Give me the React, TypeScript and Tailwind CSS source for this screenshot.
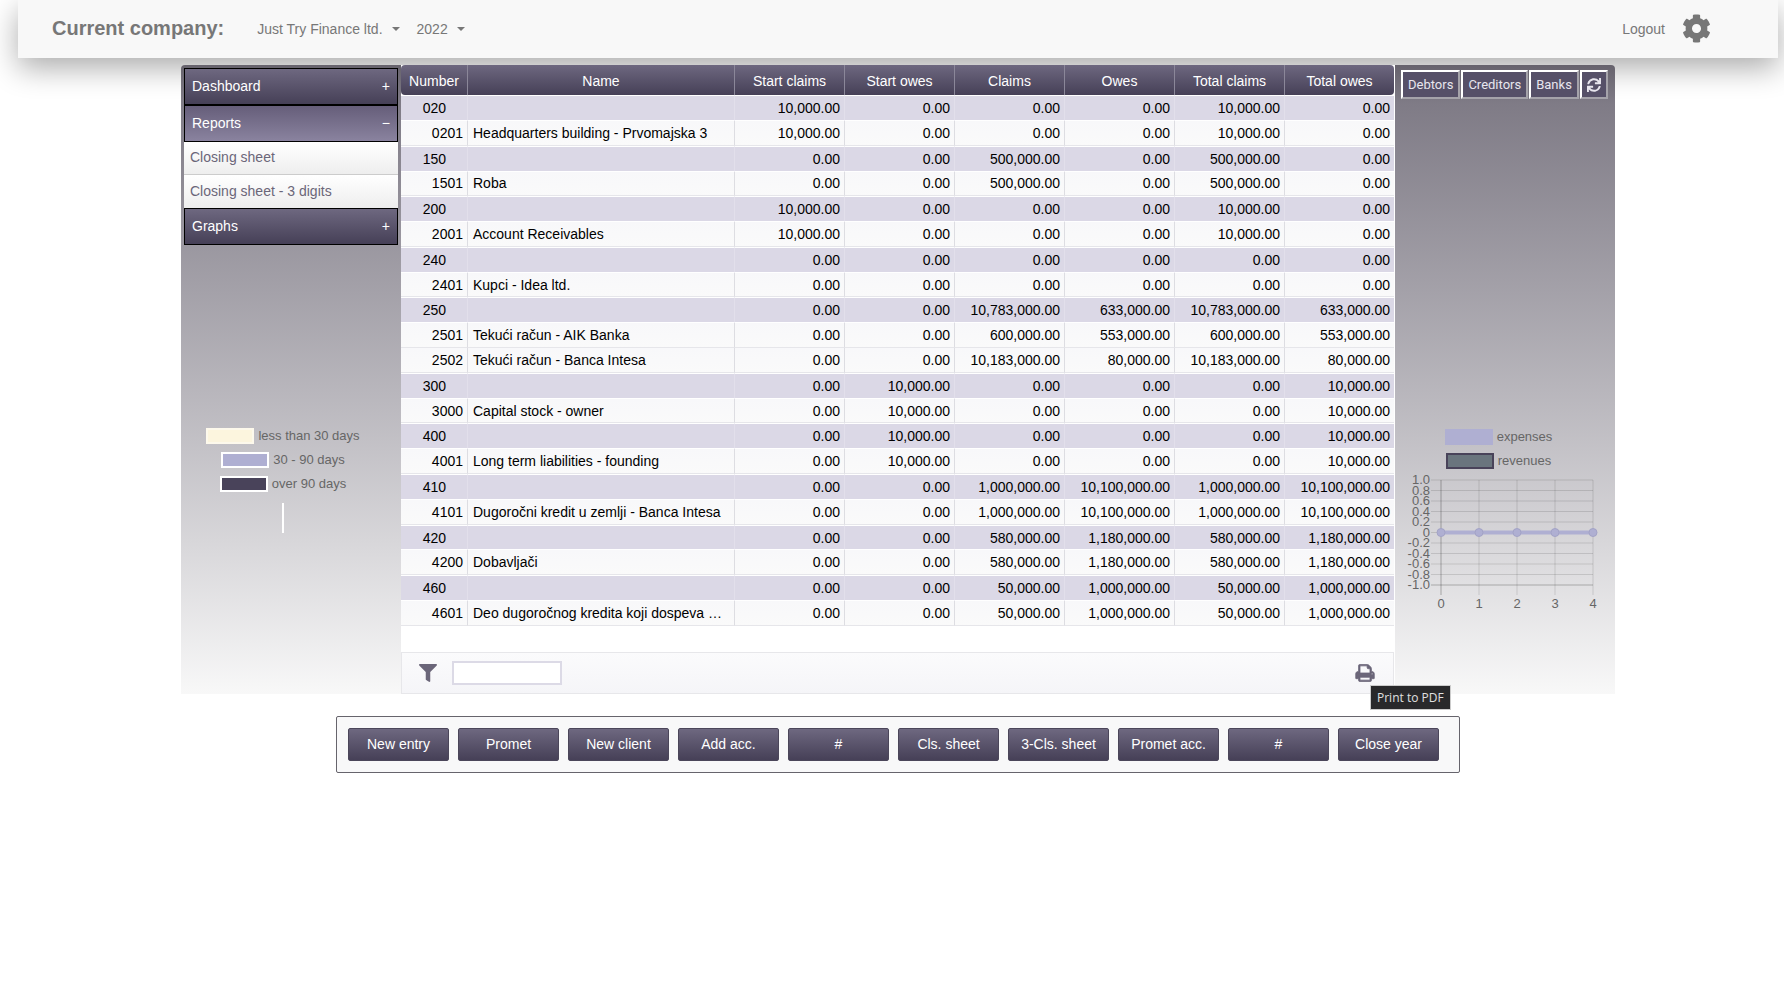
import React from 'react';
import { FaFilter, FaSync, FaCog } from 'react-icons/fa';

type Row = [string, string, string, string, string, string, string, string];

const Z = '0.00';
const rows: Row[] = [
  ['020', '', '10,000.00', Z, Z, Z, '10,000.00', Z],
  ['0201', 'Headquarters building - Prvomajska 3', '10,000.00', Z, Z, Z, '10,000.00', Z],
  ['150', '', Z, Z, '500,000.00', Z, '500,000.00', Z],
  ['1501', 'Roba', Z, Z, '500,000.00', Z, '500,000.00', Z],
  ['200', '', '10,000.00', Z, Z, Z, '10,000.00', Z],
  ['2001', 'Account Receivables', '10,000.00', Z, Z, Z, '10,000.00', Z],
  ['240', '', Z, Z, Z, Z, Z, Z],
  ['2401', 'Kupci - Idea ltd.', Z, Z, Z, Z, Z, Z],
  ['250', '', Z, Z, '10,783,000.00', '633,000.00', '10,783,000.00', '633,000.00'],
  ['2501', 'Tekući račun - AIK Banka', Z, Z, '600,000.00', '553,000.00', '600,000.00', '553,000.00'],
  ['2502', 'Tekući račun - Banca Intesa', Z, Z, '10,183,000.00', '80,000.00', '10,183,000.00', '80,000.00'],
  ['300', '', Z, '10,000.00', Z, Z, Z, '10,000.00'],
  ['3000', 'Capital stock - owner', Z, '10,000.00', Z, Z, Z, '10,000.00'],
  ['400', '', Z, '10,000.00', Z, Z, Z, '10,000.00'],
  ['4001', 'Long term liabilities - founding', Z, '10,000.00', Z, Z, Z, '10,000.00'],
  ['410', '', Z, Z, '1,000,000.00', '10,100,000.00', '1,000,000.00', '10,100,000.00'],
  ['4101', 'Dugoročni kredit u zemlji - Banca Intesa', Z, Z, '1,000,000.00', '10,100,000.00', '1,000,000.00', '10,100,000.00'],
  ['420', '', Z, Z, '580,000.00', '1,180,000.00', '580,000.00', '1,180,000.00'],
  ['4200', 'Dobavljači', Z, Z, '580,000.00', '1,180,000.00', '580,000.00', '1,180,000.00'],
  ['460', '', Z, Z, '50,000.00', '1,000,000.00', '50,000.00', '1,000,000.00'],
  ['4601', 'Deo dugoročnog kredita koji dospeva …', Z, Z, '50,000.00', '1,000,000.00', '50,000.00', '1,000,000.00'],
];

const columns = ['Number', 'Name', 'Start claims', 'Start owes', 'Claims', 'Owes', 'Total claims', 'Total owes'];

const actions = ['New entry', 'Promet', 'New client', 'Add acc.', '#', 'Cls. sheet', '3-Cls. sheet', 'Promet acc.', '#', 'Close year'];

function Caret() {
  return <span className="border-x-4 border-t-4 border-x-transparent border-t-current" />;
}

function TopBar() {
  return (
    <header className="mx-[6px] flex h-[58px] items-center bg-[#f8f8f8] pb-[2px] pl-[34px] pr-[67px] text-[#777] shadow-[0_10px_30px_rgba(0,0,0,0.33)]">
      <h1 className="text-[20px] font-bold">Current company:</h1>
      <nav className="ml-[33px] flex items-center gap-[17px] pt-[2px] text-sm">
        <button className="flex items-center gap-[9px]">Just Try Finance ltd. <Caret /></button>
        <button className="flex items-center gap-[9px]">2022 <Caret /></button>
      </nav>
      <div className="ml-auto flex items-center gap-[17px] text-sm">
        <a href="#logout" className="pt-[2px]">Logout</a>
        <button aria-label="Settings"><FaCog className="size-[29px]" /></button>
      </div>
    </header>
  );
}

function MenuHeader({ label, open = false }: { label: string; open?: boolean }) {
  return (
    <button
      aria-expanded={open}
      className={
        'flex h-[37px] w-full items-center justify-between border border-black bg-linear-to-b px-[7px] pb-[2px] text-sm text-white ' +
        (open ? 'from-[#665e7a] to-[#8a839f]' : 'from-[#6e6880] to-[#464057]')
      }
    >
      <span>{label}</span>
      <span>{open ? '−' : '+'}</span>
    </button>
  );
}

function LegendItem({ label, swatch }: { label: string; swatch: string }) {
  return (
    <li className="flex items-center gap-1 text-[13px] leading-[24px]">
      <span className={'h-4 w-12 border-2 ' + swatch} />
      {label}
    </li>
  );
}

function LeftPanel() {
  return (
    <aside className="flex w-[220px] shrink-0 flex-col rounded-tl-sm bg-linear-to-b from-[#67636d] via-[#7f7b86] via-[6%] to-[#f8f8f8] px-[3px] pt-[3px]">
      <MenuHeader label="Dashboard" />
      <MenuHeader label="Reports" open />
      <a href="#closing" className="flex h-[33px] items-center border-b border-[#ccc] bg-linear-to-b from-white to-[#eee] px-[6px] pb-[2px] text-sm text-[#6b6679]">Closing sheet</a>
      <a href="#closing3" className="flex h-[33px] items-center bg-linear-to-b from-white to-[#eee] px-[6px] pb-[2px] text-sm text-[#6b6679]">Closing sheet - 3 digits</a>
      <MenuHeader label="Graphs" />
      <div className="mt-[179px] flex flex-col items-center pr-[16px] text-[#666]">
        <ul className="flex flex-col items-center">
          <LegendItem label="less than 30 days" swatch="border-[#fdf9ec] bg-[#fcf5de]" />
          <LegendItem label="30 - 90 days" swatch="border-white bg-[#afafd2]" />
          <LegendItem label="over 90 days" swatch="border-white bg-[#49435a]" />
        </ul>
        <span className="mt-[7px] h-[30px] w-[2px] bg-white" />
      </div>
    </aside>
  );
}

function Ledger() {
  return (
    <table className="h-[561px] w-full table-fixed border-separate border-spacing-0 text-sm leading-5 text-black">
      <colgroup>
        <col className="w-[66px]" />
        <col />
        <col className="w-[110px]" />
        <col className="w-[110px]" />
        <col className="w-[110px]" />
        <col className="w-[110px]" />
        <col className="w-[110px]" />
        <col className="w-[110px]" />
      </colgroup>
      <thead>
        <tr className="text-white">
          {columns.map((c) => (
            <th key={c} className="h-[30px] border-l border-[#8b8799] bg-linear-to-b from-[#6e6880] to-[#464057] p-0 pt-px font-normal first:rounded-l-sm first:border-l-0 last:rounded-r-sm">
              {c}
            </th>
          ))}
        </tr>
      </thead>
      <tbody>
        {rows.map((r) => {
          const group = r[0].length === 3;
          return (
            <tr key={r[0]} className={group ? 'bg-[#dbd8e6]' : 'bg-linear-to-b from-[#f8f8fa] to-[#fafafa]'}>
              {r.map((v, i) => (
                <td
                  key={i}
                  className={
                    'truncate border-l py-0 first:border-l-0 ' +
                    (group ? 'border-y border-y-white border-l-[#e2dfeb] ' : 'border-b border-b-[#e6e6ea] border-l-[#dddde2] ') +
                    (i === 1 ? 'pl-[5px] pr-0 text-left' : i === 0 && group ? 'pr-[21px] text-right' : 'pr-1 text-right')
                  }
                >
                  {v}
                </td>
              ))}
            </tr>
          );
        })}
      </tbody>
    </table>
  );
}

function PrintIcon() {
  return (
    <svg viewBox="-40 -40 1744 1616" className="h-[18px] w-[20px]" fill="currentColor" stroke="currentColor" strokeWidth="70" aria-hidden="true">
      <path d="M384 1408h896v-256H384v256zm0-640h896V384h-160q-40 0-68-28t-28-68V128H384v640zm1152 64q0-26-19-45t-45-19-45 19-19 45 19 45 45 19 45-19 19-45zm128 0v416q0 13-9.500 22.500t-22.500 9.500h-224v160q0 40-28 68t-68 28H352q-40 0-68-28t-28-68v-160H32q-13 0-22.500-9.500T0 1248V832q0-79 56.500-135.500T192 640h64V96q0-40 28-68t68-28h672q40 0 88 20t76 48l152 152q28 28 48 76t20 88v256h64q79 0 135.500 56.500T1664 832z" />
    </svg>
  );
}

function CenterPanel() {
  return (
    <section className="flex min-w-0 flex-1 flex-col bg-white pr-px">
      <Ledger />
      <div className="mt-[26px] flex h-[42px] items-center border border-[#e7e7ea] bg-linear-to-b from-[#fbfbfc] to-[#f5f5f8] pl-[17px] pr-[18px] text-[#6b6679]">
        <label htmlFor="filter" aria-label="Filter"><FaFilter className="size-[18px]" /></label>
        <input id="filter" className="ml-[15px] h-6 w-[110px] border-2 border-[#dcdae6] bg-white px-1 text-sm" />
        <div className="relative ml-auto">
          <button aria-label="Print to PDF" className="block"><PrintIcon /></button>
          <span role="tooltip" className="absolute left-[15px] top-[21px] w-max border border-[#ccc] bg-[#29292b] px-[6px] font-['Open_Sans',sans-serif] text-xs leading-[23px] text-[#e0e0e0]">
            Print to PDF
          </span>
        </div>
      </div>
    </section>
  );
}

function LineChart() {
  const ys = ['1.0', '0.8', '0.6', '0.4', '0.2', '0', '-0.2', '-0.4', '-0.6', '-0.8', '-1.0'];
  const x0 = 46;
  const dx = 38;
  const y0 = 7;
  const dy = 105 / 10;
  return (
    <svg viewBox="0 0 212 140" className="h-[140px] w-[212px]" fontSize="13" fill="#666" aria-label="Expenses and revenues">
      {ys.map((t, i) => (
        <g key={t}>
          <line x1={x0 - 10} x2={x0 + 4 * dx} y1={y0 + i * dy} y2={y0 + i * dy} stroke="#000" strokeOpacity={i === 10 ? 0.25 : 0.12} />
          <text x={x0 - 11} y={y0 + i * dy + 4} textAnchor="end">{t}</text>
        </g>
      ))}
      {[0, 1, 2, 3, 4].map((n) => (
        <g key={n}>
          <line x1={x0 + n * dx} x2={x0 + n * dx} y1={y0} y2={y0 + 115} stroke="#000" strokeOpacity={n === 0 ? 0.28 : 0.12} />
          <text x={x0 + n * dx} y={y0 + 128} textAnchor="middle">{n}</text>
        </g>
      ))}
      <line x1={x0} x2={x0 + 4 * dx} y1={y0 + 5 * dy} y2={y0 + 5 * dy} stroke="#afafd2" strokeWidth="4" />
      {[0, 1, 2, 3, 4].map((n) => (
        <circle key={n} cx={x0 + n * dx} cy={y0 + 5 * dy} r="4" fill="#afafd2" stroke="#a3a3c6" />
      ))}
    </svg>
  );
}

function RightPanel() {
  const cls = 'h-[29px] border-2 border-t-white border-l-white border-b-[#a5a3aa] border-r-[#a5a3aa] bg-[#565068] px-[5px] text-[#e8e6ee]';
  return (
    <aside className="flex w-[220px] shrink-0 flex-col rounded-tr-sm bg-linear-to-b from-[#67636d] via-[#7f7b86] via-[6%] to-[#f8f8f8] pt-[5px]">
      <div className="flex gap-px pl-[6px] font-[Roboto,sans-serif] text-[13px]">
        <button className={cls}>Debtors</button>
        <button className={cls}>Creditors</button>
        <button className={cls}>Banks</button>
        <button aria-label="Refresh" className={cls}><FaSync className="size-[14px]" /></button>
      </div>
      <div className="mt-[326px] text-[#666]">
        <ul className="flex flex-col items-center pr-[13px]">
          <LegendItem label="expenses" swatch="border-[#afafd2] bg-[#afafd2]" />
          <LegendItem label="revenues" swatch="border-[#49435a] bg-[#6a757e]" />
        </ul>
        <LineChart />
      </div>
    </aside>
  );
}

export default function App() {
  return (
    <div className="min-h-screen overflow-x-hidden bg-white pl-3 font-['Liberation_Sans',Arial,sans-serif]">
      <TopBar />
      <main className="relative mt-[7px] px-[169px]">
        <div className="flex">
          <LeftPanel />
          <CenterPanel />
          <RightPanel />
        </div>
        <div className="mx-[155px] mt-[22px] flex gap-[9px] rounded-xs border border-[#66646c] bg-[#f8f8f9] pb-[11px] pl-[11px] pr-[20px] pt-[11px]">
          {actions.map((a, i) => (
            <button key={i} className="h-[33px] flex-1 rounded-xs border border-[#4b465a] bg-linear-to-b from-[#6e6880] to-[#464057] pb-[2px] text-sm text-white">
              {a}
            </button>
          ))}
        </div>
      </main>
    </div>
  );
}
